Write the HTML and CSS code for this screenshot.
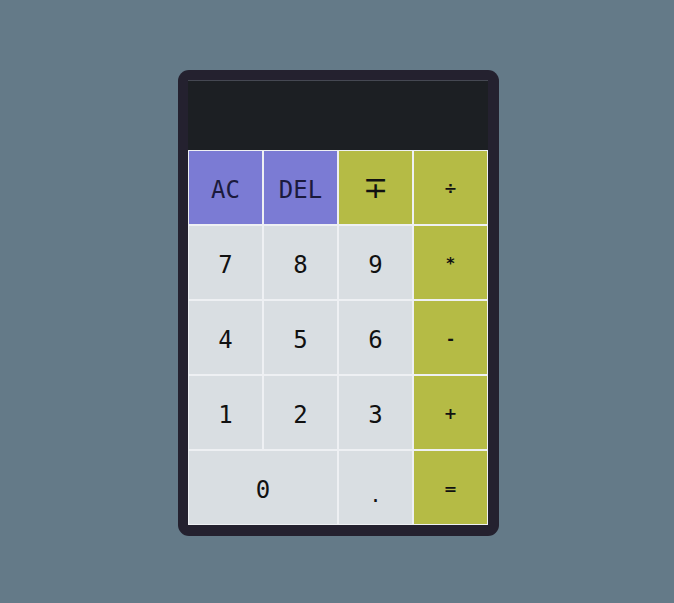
FILE: index.html
```html
<!DOCTYPE html>
<html lang="en">
<head>
<meta charset="utf-8">
<title>Calculator</title>
<link rel="stylesheet" href="styles.css">
</head>
<body>
<main class="calculator">
  <div class="display"></div>
  <div class="keys">
    <button class="key key-fn">AC</button>
    <button class="key key-fn">DEL</button>
    <button class="key key-op key-sign">∓</button>
    <button class="key key-op key-sym">÷</button>
    <button class="key">7</button>
    <button class="key">8</button>
    <button class="key">9</button>
    <button class="key key-op key-sym">*</button>
    <button class="key">4</button>
    <button class="key">5</button>
    <button class="key">6</button>
    <button class="key key-op key-sym">-</button>
    <button class="key">1</button>
    <button class="key">2</button>
    <button class="key">3</button>
    <button class="key key-op key-sym">+</button>
    <button class="key key-wide">0</button>
    <button class="key key-dot">.</button>
    <button class="key key-op key-sym">=</button>
  </div>
</main>
</body>
</html>
```
FILE: styles.css
```css
html, body {
  margin: 0;
  padding: 0;
}
body {
  background: #647a88;
  min-height: 100vh;
  box-sizing: border-box;
  padding: 3px 0 0 3px;
  display: flex;
  align-items: center;
  justify-content: center;
  font-family: "DejaVu Sans Mono", monospace;
}
.calculator {
  background: #24212f;
  border-radius: 11px;
  padding: 10px 11px 11px 10px;
  width: 300px;
}
.display {
  height: 69px;
  background: #1c1f23;
  border-top: 1px solid #454852;
}
.keys {
  display: grid;
  grid-template-columns: repeat(4, 75px);
  grid-auto-rows: 75px;
}
.key {
  margin: 0;
  padding: 4px 0 0;
  border: 1px solid #eef0f3;
  background: #d9dee2;
  color: #111;
  font-family: "DejaVu Sans Mono", monospace;
  font-size: 24px;
  display: flex;
  align-items: center;
  justify-content: center;
}
.key-fn {
  background: #7b7bd4;
  color: #1b1a3c;
}
.key-op {
  background: #b5bb45;
}
.key-sym {
  font-family: "DejaVu Sans", sans-serif;
  font-weight: bold;
  font-size: 16px;
  padding-top: 2px;
}
.key-sign {
  font-family: "DejaVu Sans", sans-serif;
  font-size: 30px;
  padding-top: 0;
}
.key-wide {
  grid-column: span 2;
}
.key-dot {
  font-size: 20px;
  padding-top: 14px;
}
```
